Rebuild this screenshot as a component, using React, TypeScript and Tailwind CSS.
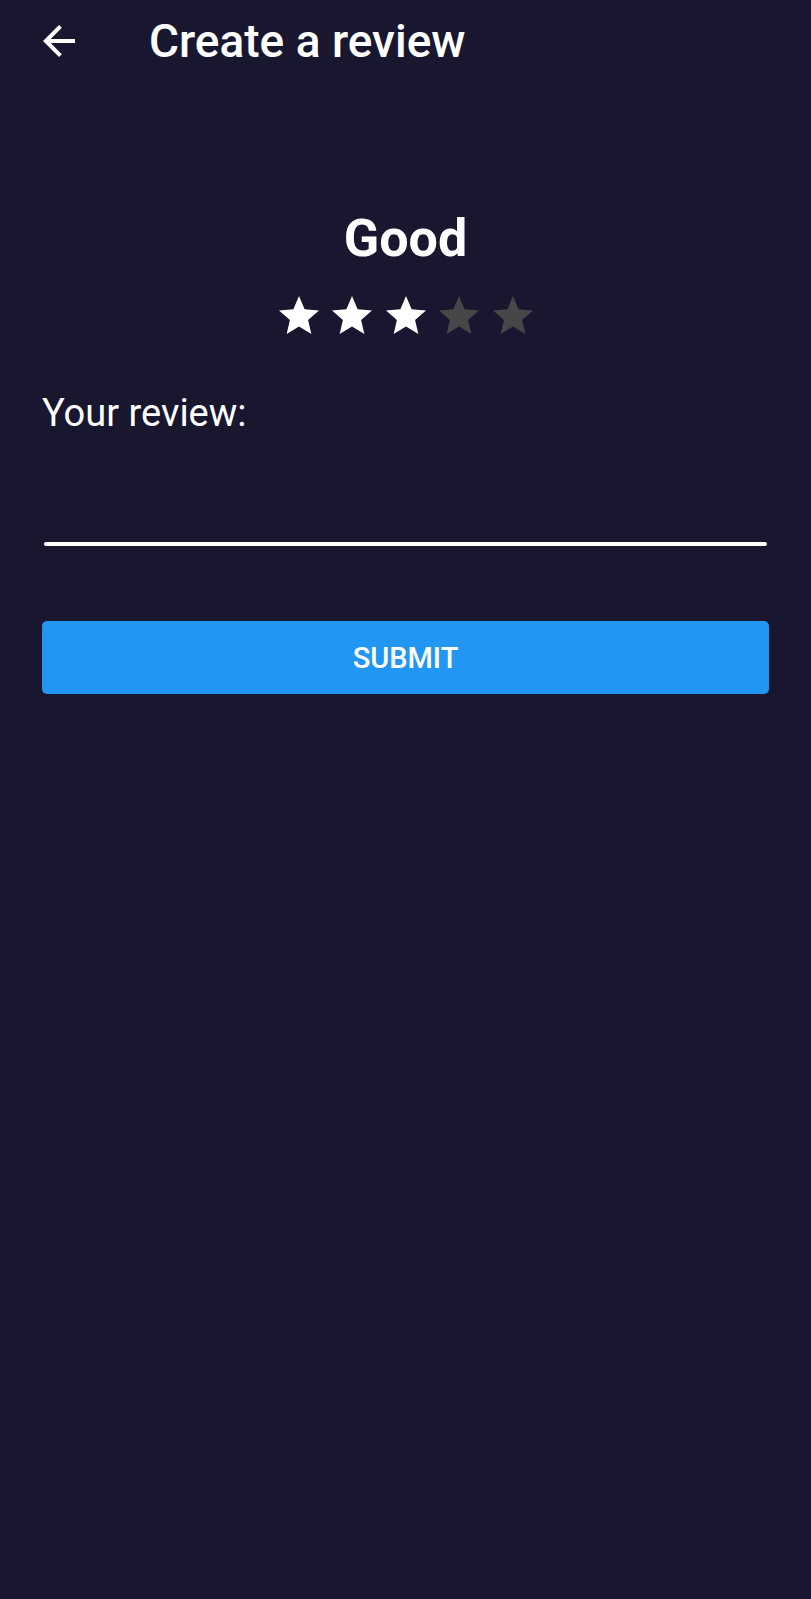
import React, { useState } from 'react';

const labels = ['Terrible', 'Bad', 'Good', 'Very good', 'Excellent'];

function Star({ filled, onClick }: { filled: boolean; onClick: () => void }) {
  return (
    <button type="button" onClick={onClick} className="w-[48px] h-[48px] flex items-center justify-center">
      <svg viewBox="0 0 24 24" className="w-[48px] h-[48px]" fill={filled ? '#ffffff' : '#474747'}>
        <path d="M12 17.27L18.18 21l-1.64-7.03L22 9.24l-7.19-.61L12 2 9.19 8.63 2 9.24l5.46 4.73L5.82 21z" />
      </svg>
    </button>
  );
}

export default function App() {
  const [rating, setRating] = useState(3);
  const [review, setReview] = useState('');

  return (
    <div className="min-h-[1599px] w-full bg-[#191730] text-white font-['Roboto',sans-serif]">
      <header className="flex items-center h-[82px]">
        <button type="button" className="ml-[35px] w-[48px] h-[48px] flex items-center justify-center">
          <svg viewBox="0 0 24 24" className="w-[48px] h-[48px]" fill="#ffffff">
            <path d="M20 11H7.83l5.59-5.59L12 4l-8 8 8 8 1.41-1.41L7.83 13H20v-2z" />
          </svg>
        </button>
        <h1 className="ml-[66px] text-[46px] leading-none font-medium">Create a review</h1>
      </header>

      <main className="px-[42px]">
        <div className="mt-[131px] text-center text-[52px] leading-none font-bold">{labels[rating - 1]}</div>
        <div className="mt-[27px] flex justify-center gap-[5.5px]">
          {[1, 2, 3, 4, 5].map((n) => (
            <Star key={n} filled={n <= rating} onClick={() => setRating(n)} />
          ))}
        </div>

        <div className="mt-[54px] text-[38px] leading-none">Your review:</div>
        <div className="mx-[2px] mt-[20px]">
          <input
            value={review}
            onChange={(e) => setReview(e.target.value)}
            className="w-full h-[90px] bg-transparent text-[34px] text-white outline-none"
          />
          <div className="h-[4px] rounded-full bg-white" />
        </div>

        <button
          type="button"
          className="mt-[75px] w-full h-[73px] rounded-[5px] bg-[#2196F3] text-[29px] font-medium text-white pt-[3px]"
        >
          SUBMIT
        </button>
      </main>
    </div>
  );
}
